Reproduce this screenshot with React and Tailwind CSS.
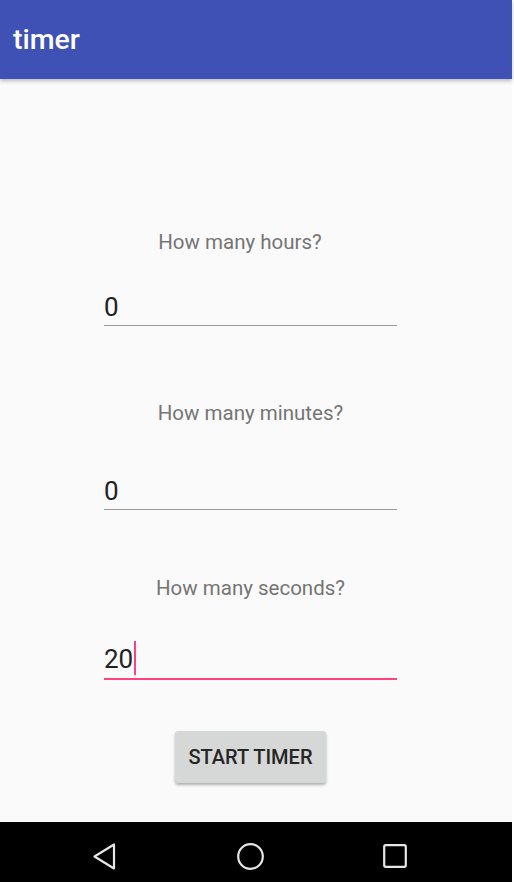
import React from "react";

function Field({ value, focused }) {
  return (
    <div
      className={`flex items-center h-[30px] box-content ${
        focused ? "pb-[4px] border-b-2 border-[#FF4081]" : "pb-[3px] border-b border-[#9a9a9a]"
      }`}
    >
      <span className="text-[26px] leading-[30px] text-[#222222]">{value}</span>
      {focused && <span className="ml-[1px] w-[2px] h-[34px] bg-[#FF4081] -mt-[2px]" />}
    </div>
  );
}

export default function App() {
  return (
    <div className="bg-white min-h-screen" style={{ fontFamily: "Roboto, 'Noto Sans', sans-serif" }}>
      <div className="w-[512px] h-[882px] flex flex-col bg-[#FAFAFA]">
        {/* Toolbar */}
        <div className="h-[79px] shrink-0 bg-[#3F51B5] flex items-center pl-[13px] shadow-[0_2px_4px_rgba(0,0,0,0.25)] relative z-10">
          <span className="text-white text-[28.5px] font-medium leading-none mt-[1px]">timer</span>
        </div>

        {/* Form */}
        <div className="flex-1 flex flex-col ml-[104px] w-[293px]">
          <div className="mt-[151px] h-[24px] text-[20.5px] leading-[24px] text-[#757575] text-center pr-[21px]">
            How many hours?
          </div>
          <div className="mt-[38px]">
            <Field value="0" />
          </div>

          <div className="mt-[75px] h-[24px] text-[20.5px] leading-[24px] text-[#757575] text-center">
            How many minutes?
          </div>
          <div className="mt-[51px]">
            <Field value="0" />
          </div>

          <div className="mt-[66px] h-[24px] text-[20.5px] leading-[24px] text-[#757575] text-center">
            How many seconds?
          </div>
          <div className="mt-[44px]">
            <Field value="20" focused />
          </div>

          <div className="mt-[51px] flex justify-center">
            <button className="w-[151px] h-[52px] bg-[#D6D7D7] rounded-[3px] shadow-[0_2px_3px_rgba(0,0,0,0.3)] text-[20px] font-medium text-[#262626]">
              START TIMER
            </button>
          </div>
        </div>

        {/* Navigation bar */}
        <div className="h-[60px] shrink-0 bg-black flex items-center pt-[8px]">
          <div className="ml-[90px] flex items-center gap-[115px]">
            <div className="w-[30px] flex justify-center">
              <svg width="26" height="29" viewBox="0 0 26 29" fill="none">
                <path d="M22 2.5 L22 26.5 L2.5 14.5 Z" stroke="#E6E6E6" strokeWidth="2.2" strokeLinejoin="round" />
              </svg>
            </div>
            <div className="w-[30px] flex justify-center">
              <svg width="29" height="29" viewBox="0 0 29 29" fill="none">
                <circle cx="14.5" cy="14.5" r="12.3" stroke="#E6E6E6" strokeWidth="2.2" />
              </svg>
            </div>
            <div className="w-[30px] flex justify-center">
              <svg width="26" height="26" viewBox="0 0 26 26" fill="none">
                <rect x="2.2" y="2.2" width="21.6" height="21.6" rx="1.5" stroke="#E6E6E6" strokeWidth="2.2" />
              </svg>
            </div>
          </div>
        </div>
      </div>
    </div>
  );
}
